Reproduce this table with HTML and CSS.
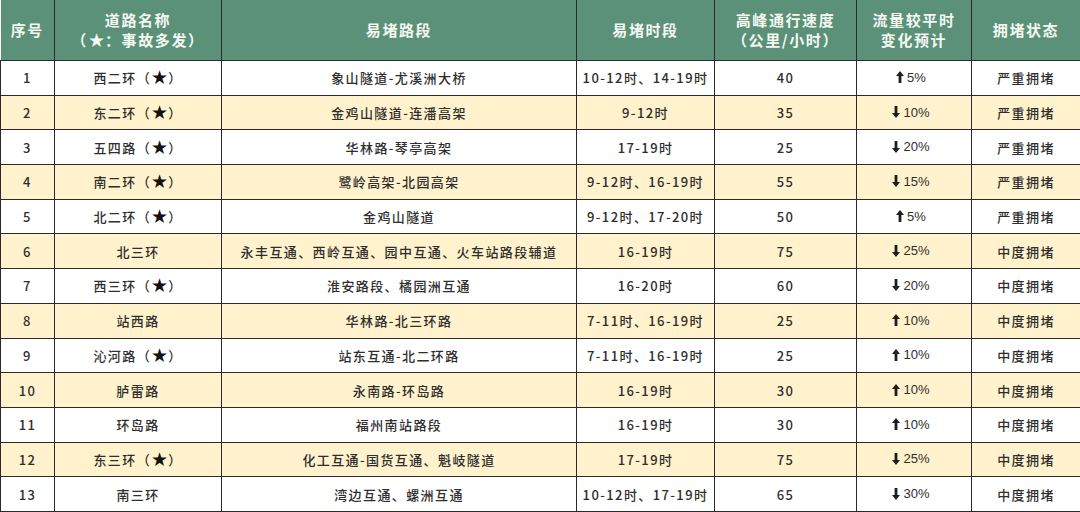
FILE: index.html
```html
<!DOCTYPE html>
<html lang="zh">
<head>
<meta charset="utf-8">
<link rel="stylesheet" href="styles.css">
</head>
<body>
<table class="tbl">
  <colgroup>
    <col class="c1"><col class="c2"><col class="c3"><col class="c4"><col class="c5"><col class="c6"><col class="c7">
  </colgroup>
  <thead>
    <tr>
      <th>序号</th>
      <th>道路名称<br>（<span class="hstar">★</span>：事故多发）</th>
      <th>易堵路段</th>
      <th>易堵时段</th>
      <th>高峰通行速度<br>（公里/小时）</th>
      <th>流量较平时<br>变化预计</th>
      <th>拥堵状态</th>
    </tr>
  </thead>
  <tbody>
    <tr><td>1</td><td>西二环（<span class="star">★</span>）</td><td>象山隧道-尤溪洲大桥</td><td>10-12时、14-19时</td><td>40</td><td><span class="chg"><svg class="ar" viewBox="0 0 8 12"><path d="M4 0 L8 5 H5.4 V12 H2.6 V5 H0 Z"/></svg>5%</span></td><td>严重拥堵</td></tr>
    <tr class="y"><td>2</td><td>东二环（<span class="star">★</span>）</td><td>金鸡山隧道-连潘高架</td><td>9-12时</td><td>35</td><td><span class="chg"><svg class="ar" viewBox="0 0 8 12"><path d="M4 12 L8 7 H5.4 V0 H2.6 V7 H0 Z"/></svg>10%</span></td><td>严重拥堵</td></tr>
    <tr><td>3</td><td>五四路（<span class="star">★</span>）</td><td>华林路-琴亭高架</td><td>17-19时</td><td>25</td><td><span class="chg"><svg class="ar" viewBox="0 0 8 12"><path d="M4 12 L8 7 H5.4 V0 H2.6 V7 H0 Z"/></svg>20%</span></td><td>严重拥堵</td></tr>
    <tr class="y"><td>4</td><td>南二环（<span class="star">★</span>）</td><td>鹭岭高架-北园高架</td><td>9-12时、16-19时</td><td>55</td><td><span class="chg"><svg class="ar" viewBox="0 0 8 12"><path d="M4 12 L8 7 H5.4 V0 H2.6 V7 H0 Z"/></svg>15%</span></td><td>严重拥堵</td></tr>
    <tr><td>5</td><td>北二环（<span class="star">★</span>）</td><td>金鸡山隧道</td><td>9-12时、17-20时</td><td>50</td><td><span class="chg"><svg class="ar" viewBox="0 0 8 12"><path d="M4 0 L8 5 H5.4 V12 H2.6 V5 H0 Z"/></svg>5%</span></td><td>严重拥堵</td></tr>
    <tr class="y"><td>6</td><td>北三环</td><td>永丰互通、西岭互通、园中互通、火车站路段辅道</td><td>16-19时</td><td>75</td><td><span class="chg"><svg class="ar" viewBox="0 0 8 12"><path d="M4 12 L8 7 H5.4 V0 H2.6 V7 H0 Z"/></svg>25%</span></td><td>中度拥堵</td></tr>
    <tr><td>7</td><td>西三环（<span class="star">★</span>）</td><td>淮安路段、橘园洲互通</td><td>16-20时</td><td>60</td><td><span class="chg"><svg class="ar" viewBox="0 0 8 12"><path d="M4 12 L8 7 H5.4 V0 H2.6 V7 H0 Z"/></svg>20%</span></td><td>中度拥堵</td></tr>
    <tr class="y"><td>8</td><td>站西路</td><td>华林路-北三环路</td><td>7-11时、16-19时</td><td>25</td><td><span class="chg"><svg class="ar" viewBox="0 0 8 12"><path d="M4 0 L8 5 H5.4 V12 H2.6 V5 H0 Z"/></svg>10%</span></td><td>中度拥堵</td></tr>
    <tr><td>9</td><td>沁河路（<span class="star">★</span>）</td><td>站东互通-北二环路</td><td>7-11时、16-19时</td><td>25</td><td><span class="chg"><svg class="ar" viewBox="0 0 8 12"><path d="M4 0 L8 5 H5.4 V12 H2.6 V5 H0 Z"/></svg>10%</span></td><td>中度拥堵</td></tr>
    <tr class="y"><td>10</td><td>胪雷路</td><td>永南路-环岛路</td><td>16-19时</td><td>30</td><td><span class="chg"><svg class="ar" viewBox="0 0 8 12"><path d="M4 0 L8 5 H5.4 V12 H2.6 V5 H0 Z"/></svg>10%</span></td><td>中度拥堵</td></tr>
    <tr><td>11</td><td>环岛路</td><td>福州南站路段</td><td>16-19时</td><td>30</td><td><span class="chg"><svg class="ar" viewBox="0 0 8 12"><path d="M4 0 L8 5 H5.4 V12 H2.6 V5 H0 Z"/></svg>10%</span></td><td>中度拥堵</td></tr>
    <tr class="y"><td>12</td><td>东三环（<span class="star">★</span>）</td><td>化工互通-国货互通、魁岐隧道</td><td>17-19时</td><td>75</td><td><span class="chg"><svg class="ar" viewBox="0 0 8 12"><path d="M4 12 L8 7 H5.4 V0 H2.6 V7 H0 Z"/></svg>25%</span></td><td>中度拥堵</td></tr>
    <tr><td>13</td><td>南三环</td><td>湾边互通、螺洲互通</td><td>10-12时、17-19时</td><td>65</td><td><span class="chg"><svg class="ar" viewBox="0 0 8 12"><path d="M4 12 L8 7 H5.4 V0 H2.6 V7 H0 Z"/></svg>30%</span></td><td>中度拥堵</td></tr>
  </tbody>
</table>
</body>
</html>
```

FILE: styles.css
```css
html, body {
  margin: 0;
  padding: 0;
  background: #ffffff;
}
.tbl {
  width: 1080px;
  border-collapse: collapse;
  table-layout: fixed;
  font-family: "Noto Sans CJK SC", "Noto Sans", sans-serif;
  color: #2e2e2e;
}
.c1 { width: 54px; }
.c2 { width: 167px; }
.c3 { width: 355px; }
.c4 { width: 138px; }
.c5 { width: 142px; }
.c6 { width: 115px; }
.c7 { width: 109px; }
.tbl th {
  height: 60px;
  padding: 0;
  background: #5b9178;
  color: #f4f7f2;
  font-size: 15px;
  font-weight: 700;
  letter-spacing: 1.6px;
  line-height: 20px;
  text-align: center;
  vertical-align: middle;
  border: 1px solid #2a2a2a;
  border-top: none;
}
.tbl th:first-child { border-left: none; }
.hstar {
  display: inline-block;
  font-family: "DejaVu Sans", sans-serif;
  font-size: 19px;
  line-height: 1;
  letter-spacing: 0;
  vertical-align: -1px;
}
.tbl td {
  height: 33.7px;
  padding: 0;
  font-size: 13px;
  font-weight: 500;
  letter-spacing: 1.4px;
  text-align: center;
  vertical-align: middle;
  border: 1px solid #2a2a2a;
  background: #ffffff;
}
.tbl tr.y td { background: #fff2cc; }
.star {
  display: inline-block;
  font-family: "DejaVu Sans", sans-serif;
  font-size: 19px;
  line-height: 1;
  color: #111111;
  letter-spacing: 0;
  vertical-align: -1px;
}
.chg {
  display: inline-flex;
  align-items: center;
  gap: 3px;
  letter-spacing: 0;
  font-family: "Liberation Sans", sans-serif;
  font-weight: 400;
  font-size: 13px;
  margin-right: 6px;
}
.ar {
  width: 8px;
  height: 12px;
  fill: #1e1e1e;
}
```
